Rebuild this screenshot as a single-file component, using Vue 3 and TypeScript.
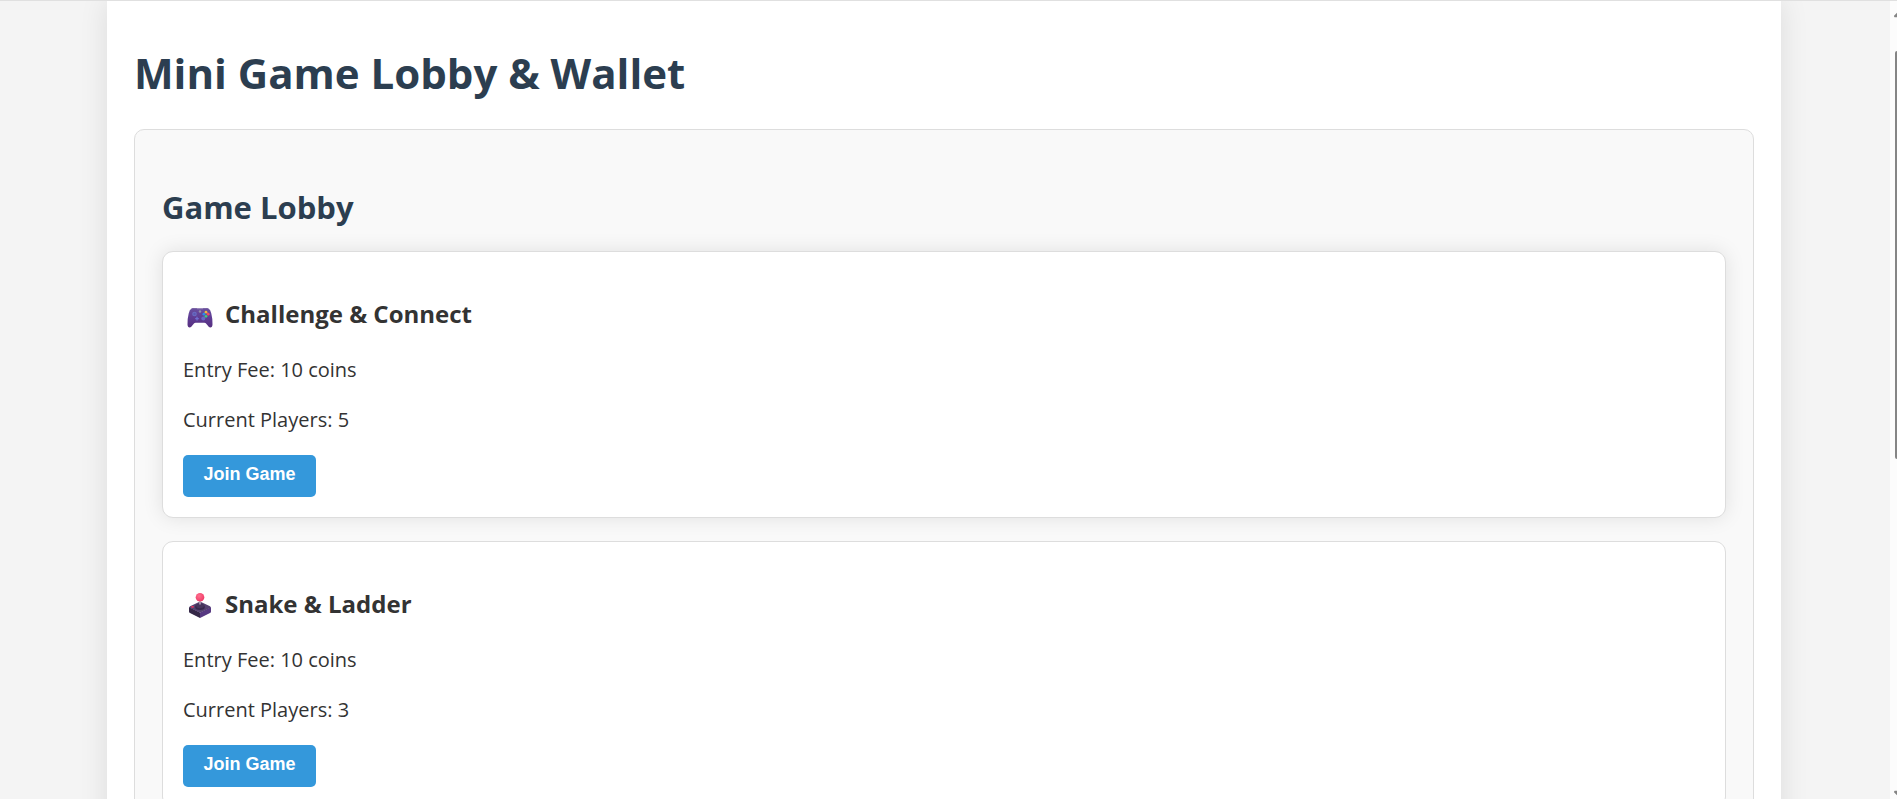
<script setup lang="ts">
import { ref } from 'vue'

interface Game {
  id: number
  name: string
  icon: 'gamepad' | 'joystick'
  fee: number
  players: number
}

const games = ref<Game[]>([
  { id: 1, name: 'Challenge & Connect', icon: 'gamepad', fee: 10, players: 5 },
  { id: 2, name: 'Snake & Ladder', icon: 'joystick', fee: 10, players: 3 },
])

const activeId = ref<number>(1)
</script>

<template>
  <div class="page">
    <div class="view">
      <main class="container">
        <h1>Mini Game Lobby &amp; Wallet</h1>
        <section class="lobby" aria-labelledby="lobby-title">
          <h2 id="lobby-title">Game Lobby</h2>
          <article
            v-for="game in games"
            :key="game.id"
            class="card"
            :class="{ raised: game.id === activeId }"
          >
            <h3>
              <svg v-if="game.icon === 'gamepad'" class="icon" viewBox="0 0 28 28" aria-hidden="true">
                <defs>
                  <linearGradient id="pad" x1="0" y1="0" x2="0" y2="1">
                    <stop offset="0" stop-color="#69509f" />
                    <stop offset="0.5" stop-color="#5f3c94" />
                    <stop offset="1" stop-color="#563080" />
                  </linearGradient>
                </defs>
                <path d="M5.5 5.6Q6 5 7.2 5H10q1 0 1.5.5h5Q17 5 18 5h2.800Q22 5 22.500 5.600Q24.500 6.500 25.300 10.500Q26.700 16 26.500 21.500Q26.400 24.500 24.300 24.500Q23 24.500 21.500 22.300L19.800 20.300Q19.300 19.800 18.400 19.800H9.600Q8.700 19.800 8.200 20.300L6.500 22.300Q5 24.500 3.700 24.500Q1.600 24.500 1.500 21.500Q1.300 16 2.700 10.500Q3.500 6.500 5.500 5.600Z" fill="url(#pad)" />
                <path d="M5.700 6.300Q6 5.500 7.200 5.500H10q.8 0 1.300.5h5.400Q17.200 5.500 18 5.500h2.800Q22 5.500 22.300 6.300" fill="none" stroke="#806aa8" stroke-width="0.900" />
                <circle cx="8.500" cy="11" r="2.300" fill="#6b6cc5" />
                <circle cx="8.500" cy="11" r="1.200" fill="#5d5aae" />
                <circle cx="17.300" cy="15.500" r="2" fill="#6668c4" />
                <path d="M11 13.800v3.600M9.200 15.600h3.600" stroke="#706fd0" stroke-width="1.300" />
                <circle cx="14" cy="8.500" r="1.200" fill="#9790a8" />
                <circle cx="20" cy="9.200" r="1.400" fill="#f0b53d" />
                <circle cx="22.200" cy="11.200" r="1.400" fill="#f04b61" />
                <circle cx="20" cy="13.300" r="1.400" fill="#42c77f" />
                <circle cx="17.900" cy="11.200" r="1.400" fill="#2b8ee9" />
              </svg>
              <svg v-else class="icon" viewBox="0 1 28 28" aria-hidden="true">
                <defs>
                  <radialGradient id="ball" cx="0.400" cy="0.350" r="0.700">
                    <stop offset="0" stop-color="#ff6f8d" />
                    <stop offset="1" stop-color="#ee3866" />
                  </radialGradient>
                </defs>
                <path d="M3 15L14 20.500V26L4 21Q3 20.500 3 19.500Z" fill="#342747" />
                <path d="M25 15L14 20.500V26L24 21Q25 20.500 25 19.500Z" fill="#573982" />
                <path d="M4 14.200L12.500 10.300Q14 9.700 15.500 10.300L24 14.200Q25.300 15 24 15.900L15.500 20.100Q14 20.800 12.500 20.100L4 15.900Q2.700 15 4 14.200Z" fill="#554270" />
                <ellipse cx="14" cy="15" rx="4.900" ry="2.900" fill="#382a4d" />
                <path d="M10 13.200Q12.700 12.500 13 10.500H15Q15.300 12.500 18 13.200Q18 16.200 14 16.200Q10 16.200 10 13.200Z" fill="#48365d" />
                <path d="M13.200 7h1.600v5.500h-1.600z" fill="#b4a8bc" />
                <ellipse cx="6.500" cy="14.900" rx="1.500" ry="0.800" fill="#ed355c" />
                <circle cx="14" cy="5.300" r="4.300" fill="url(#ball)" />
              </svg>
              <span>{{ game.name }}</span>
            </h3>
            <p>Entry Fee: {{ game.fee }} coins</p>
            <p>Current Players: {{ game.players }}</p>
            <button type="button" @click="activeId = game.id">Join Game</button>
          </article>
        </section>
      </main>
    </div>
    <div class="scrollbar" aria-hidden="true">
      <svg class="arrow" viewBox="0 0 4 6"><path d="M4 0L0 4Q0 6 1 6H4Z" fill="#858585" /></svg>
      <span class="thumb"></span>
      <svg class="arrow" viewBox="0 0 4 6"><path d="M4 6L0 2Q0 0 1 0H4Z" fill="#858585" /></svg>
    </div>
  </div>
</template>

<style>
body {
  margin: 0;
  background: #f4f4f4;
}
</style>

<style scoped>
.page {
  box-sizing: border-box;
  display: flex;
  height: 100vh;
  overflow: hidden;
  border-top: 1px solid #e0e0e0;
  background: #f4f4f4;
  color: #333;
  font-family: "Segoe UI", "Open Sans", "Noto Sans", sans-serif;
}

.view {
  flex: 1;
  min-width: 0;
  padding: 0 109px 0 107px;
  overflow: hidden;
}

.container {
  padding: 42px 27px 27px;
  background: #fff;
  box-shadow: 0 0 27px rgba(0, 0, 0, 0.1);
}

h1,
h2 {
  margin: 0;
  color: #2c3e50;
  font-weight: 700;
}

h1 {
  margin-bottom: 26px;
  font-size: 42px;
  line-height: 60px;
}

h2 {
  margin-bottom: 22px;
  font-size: 31px;
  line-height: 44px;
}

.lobby {
  padding: 55px 27px 27px;
  border: 1px solid #ddd;
  border-radius: 10px;
  background: #f9f9f9;
}

.card {
  margin-bottom: 23px;
  padding: 45px 20px 20px;
  border: 1px solid #ddd;
  border-radius: 11px;
  background: #fff;
}

.raised {
  box-shadow: 0 0 20px rgba(0, 0, 0, 0.1);
}

h3 {
  display: flex;
  align-items: flex-end;
  gap: 11px;
  margin: 0 0 24px;
  padding-left: 3px;
  font-size: 24px;
  font-weight: 700;
  line-height: 34px;
}

.icon {
  flex: none;
  width: 28px;
  height: 28px;
}

p {
  margin: 0 0 20px;
  font-size: 20px;
  line-height: 30px;
}

button {
  display: block;
  min-width: 133px;
  height: 42px;
  padding: 0 20px 3px;
  border: 0;
  border-radius: 5px;
  background: #3498db;
  color: #fff;
  font: 700 18px "Liberation Sans", Arial, sans-serif;
  cursor: pointer;
}

.scrollbar {
  box-sizing: border-box;
  display: flex;
  flex: none;
  flex-direction: column;
  align-items: flex-end;
  width: 7px;
  padding: 11px 0 3px;
  background: #fcfcfc;
}

.arrow {
  width: 3px;
  height: 6px;
}

.thumb {
  width: 2px;
  height: 52%;
  margin: 33px 0 auto;
  border-radius: 2px 0 0 2px;
  background: #858585;
}
</style>
